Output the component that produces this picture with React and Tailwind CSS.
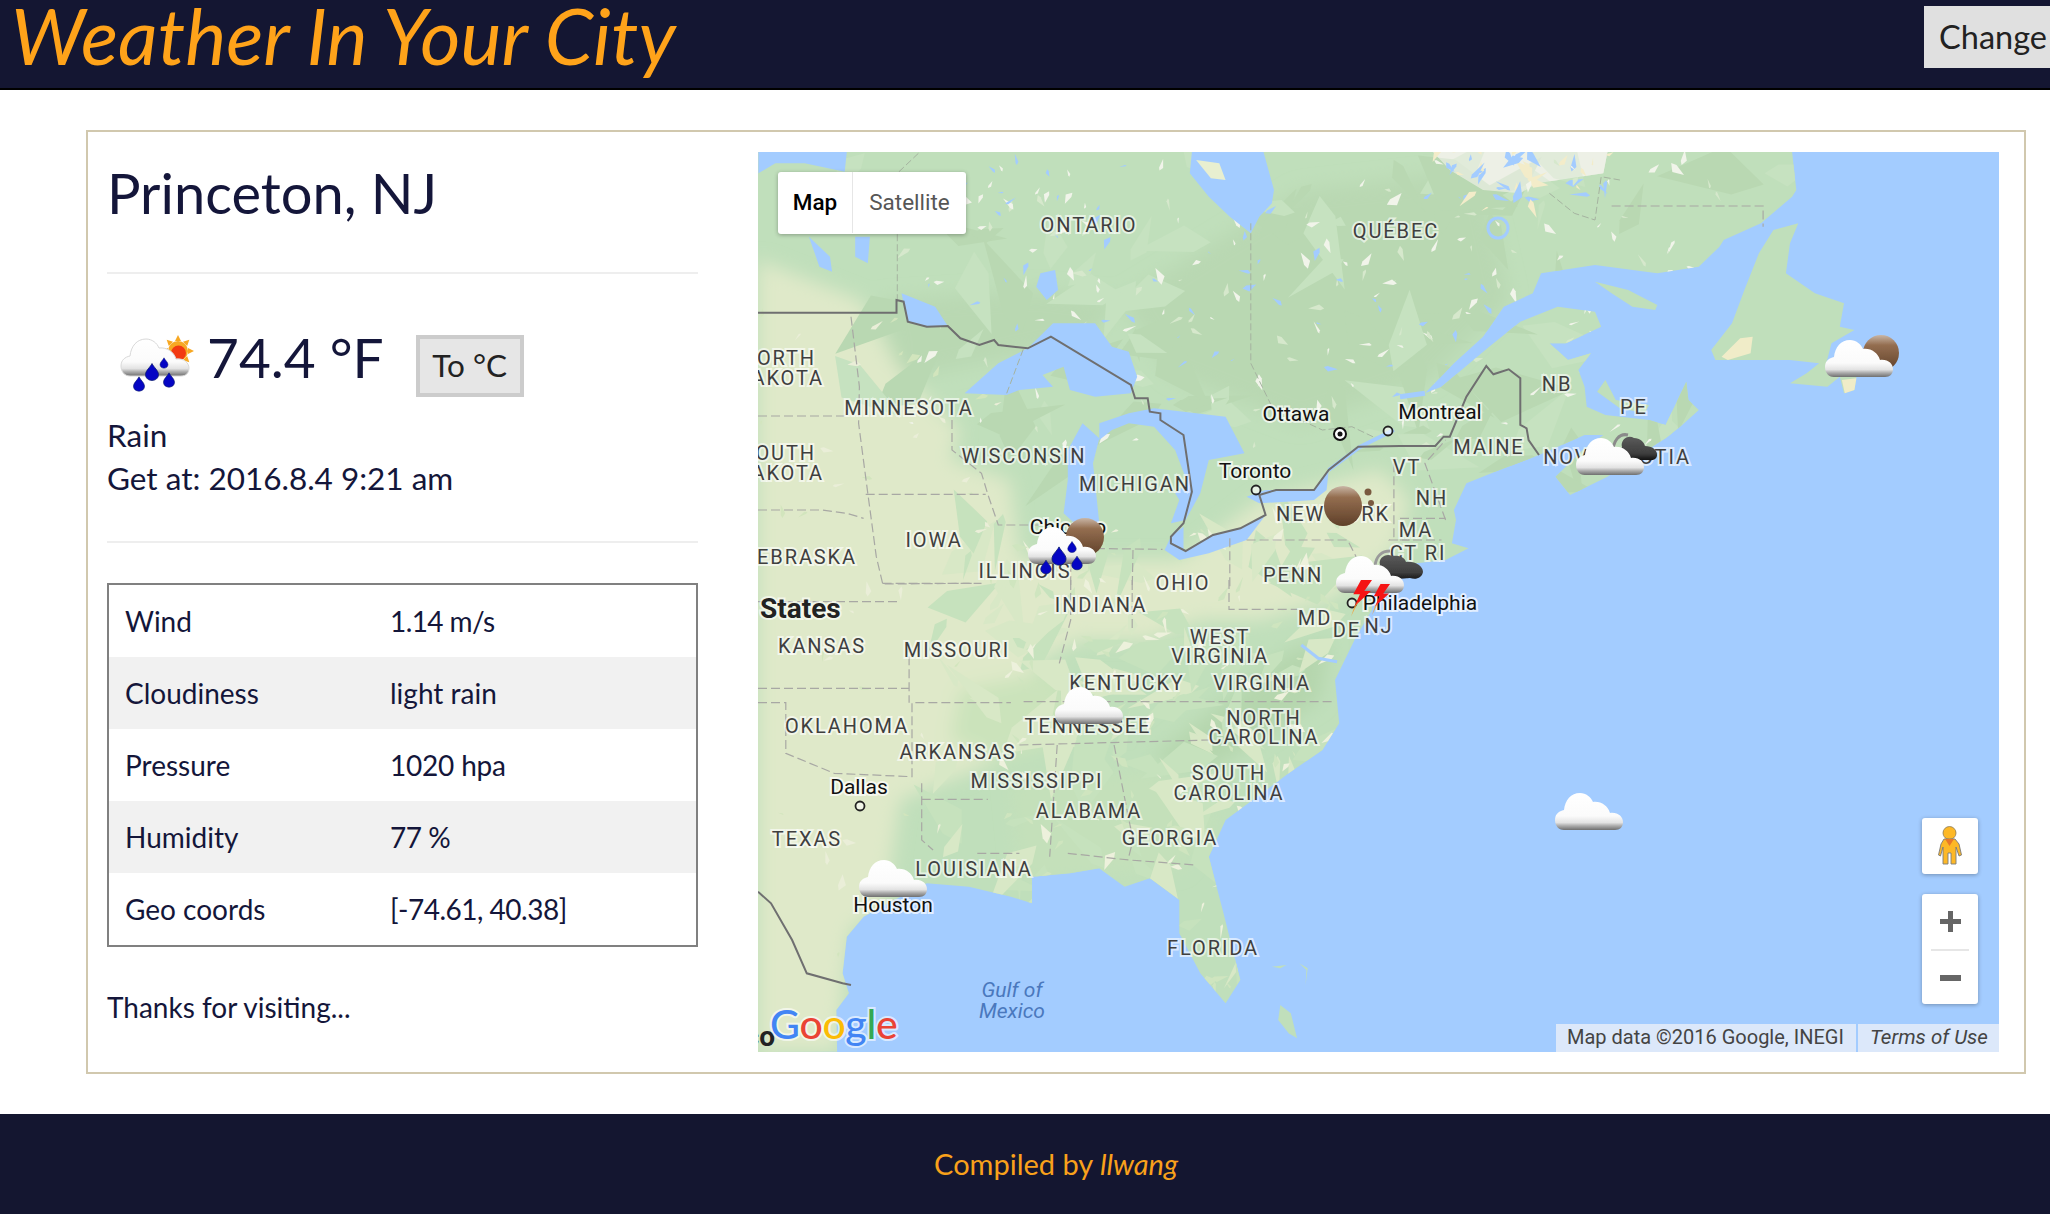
import React from 'react';

// helpers to read points off the map crops, into page coordinates
const z3 = (pts) => pts.map(([x, y]) => [750 + x / 2.376, 130 + y / 3]);
const z4 = (pts) => pts.map(([x, y]) => [1400 + x / 2.41, 130 + y / 3]);
const z5 = (pts) => pts.map(([x, y]) => [750 + x / 2.376, 580 + y / 3]);
const str = (pts) => pts.map((p) => p[0].toFixed(1) + ',' + p[1].toFixed(1)).join(' ');

const LAND = [
  [758, 152],
  ...z4([[945,66],[955,180],[945,200],[870,280],[780,330],[770,350],[720,410],[620,430],[470,405],[340,430],[320,490],[250,530],[200,620],[130,700],[60,790],[100,770],[215,650],[290,575],[380,530],[470,545],[485,590],[400,640],[360,640],[405,690],[460,670],[430,720],[445,770],[450,830],[495,855],[600,870],[640,885],[690,755],[695,810],[720,840],[680,885],[640,925],[620,940],[500,1040],[410,1095],[375,1040],[440,960],[490,915],[445,915],[335,975],[240,1020],[160,1060],[130,1140],[135,1170],[125,1240],[165,1255],[110,1290],[40,1300]]),
  [1372, 582], [1372, 610],
  ...z5([[1440,170],[1390,300],[1400,430],[1360,510],[1280,580],[1130,720],[1090,830],[1125,1000],[1165,1200],[1130,1270],[1070,1180],[1020,1060],[1020,960],[950,895],[890,920],[830,865],[760,880],[670,890],[670,970],[620,950],[520,920],[420,910],[320,975],[270,1010],[230,1070],[220,1180],[235,1240],[205,1290],[207,1415]]),
  [758, 1052],
];

const ISLANDS = [
  z4([[750,660],[800,580],[830,480],[865,370],[900,300],[960,280],[940,340],[930,430],[1000,490],[1070,520],[1060,590],[1095,600],[1040,640],[1025,710],[1100,740],[1095,780],[1070,790],[1060,740],[1030,770],[940,760],[980,730],[1010,700],[940,690],[760,690]]),
  z4([[470,455],[550,480],[620,525],[615,540],[560,530],[510,490]]),
  z4([[475,785],[495,750],[520,810],[600,825],[590,850],[530,835]]),
  z5([[1260,1275],[1285,1300],[1300,1375],[1280,1360],[1255,1320]]),
  z5([[1240,1160],[1275,1155],[1260,1165]]),
  z5([[1305,1150],[1325,1165],[1320,1215],[1322,1170]]),
];

const LAKES = [
  z3([[510,790],[590,700],[660,655],[720,580],[820,580],[860,650],[900,665],[920,740],[905,790],[820,800],[760,780],[745,710],[695,735],[720,770],[640,780],[610,795]]),
  z3([[755,960],[790,880],[830,925],[815,1000],[830,1180],[780,1190],[745,1150],[755,1050]]),
  z3([[830,880],[900,850],[960,835],[1130,860],[1175,970],[1090,990],[1070,1090],[1035,1170],[1000,1180],[1020,1110],[1010,1090],[1040,1060],[1010,960],[960,890],[900,880],[860,900],[830,930]]),
  z3([[985,1260],[1000,1220],[1030,1190],[1030,1265],[1100,1215],[1165,1195],[1225,1155],[1180,1230],[1090,1270],[1020,1290]]),
  z3([[1180,1100],[1225,1080],[1340,1080],[1375,1020],[1370,1080],[1340,1110],[1210,1120]]),
  z3([[1050,66],[1220,66],[1245,180],[1240,220],[1210,260],[1190,310],[1140,260],[1090,200],[1045,130]]),
  z3([[20,66],[230,66],[225,125],[130,100],[60,100],[20,130]]),
  z3([[140,320],[190,380],[195,425],[165,410]]),
  z3([[250,320],[285,320],[280,400],[250,380]]),
  z3([[690,430],[725,420],[732,480],[705,510],[680,470]]),
  z3([[360,490],[440,530],[470,588],[420,590],[375,575]]),
];

const STATE_LINES = [
  z3([[240,560],[260,770],[258,880],[280,1090],[300,1280],[315,1360]]),
  z3([[19,858],[225,858]]),
  z3([[275,1093],[560,1093]]),
  z3([[19,1140],[170,1140],[230,1150],[270,1165]]),
  z3([[480,870],[480,960],[550,1030],[565,1093],[590,1185],[760,1185]]),
  z3([[760,1255],[980,1258]]),
  z3([[910,1260],[908,1380]]),
  z3([[1140,1225],[1140,1380]]),
  z3([[1180,1230],[1420,1230],[1440,1280]]),
  z3([[1530,1000],[1530,1220],[1520,1230],[1568,1230]]),
  z3([[315,1360],[550,1360]]),
  z3([[762,1260],[762,1380]]),
  z5([[320,12],[530,10]]),
  z5([[19,65],[350,65]]),
  z5([[19,325],[378,325]]),
  z5([[378,190],[378,368]]),
  z5([[19,368],[85,368],[85,520],[200,580],[385,590],[385,368],[620,368]]),
  z5([[408,610],[408,780],[435,810]]),
  z5([[408,658],[565,658]]),
  z5([[640,495],[1090,480]]),
  z5([[650,365],[1390,365]]),
  z5([[730,495],[712,830]]),
  z5([[865,495],[910,780],[900,830]]),
  z5([[755,820],[900,840],[1060,855]]),
  z5([[540,820],[640,820]]),
  z5([[762,0],[762,120],[735,250]]),
  z5([[908,0],[908,150]]),
  z5([[1138,0],[1138,88],[1300,88]]),
  z4([[510,228],[875,228],[875,290]]),
  z4([[110,1170],[60,1000],[110,930]]),
  z4([[0,1165],[110,1165]]),
  z4([[0,1230],[100,1230]]),
];
// the fainter provincial lines in the green of Canada
const PROV_LINES = [
  z3([[1190,280],[1190,700],[1240,830],[1360,900],[1430,890],[1480,920]]),
  z3([[400,70],[350,130],[350,510]]),
  z4([[360,190],[420,250],[470,270],[485,140],[530,150]]),
  z3([[610,790],[650,655]]),
];

const BORDER = [
  ...z3([[19,548],[348,548],[348,510],[365,515],[375,575],[420,590],[470,588],[500,625],[545,645],[580,630],[590,645],[660,655],[715,620],[905,765],[915,805],[945,805],[950,845],[975,850],[975,870],[1030,915],[1050,1085],[1030,1180],[1000,1220],[1000,1240],[1035,1263],[1100,1215],[1165,1195],[1225,1155],[1210,1095],[1250,1080],[1340,1080],[1375,1020],[1445,950]]),
  ...z4([[0,948],[85,948],[105,920],[120,920],[160,800],[208,708],[225,733],[262,718],[290,745],[290,885],[305,895],[310,930],[335,975]]),
];
const MEX = z5([[19,935],[50,970],[100,1080],[135,1180],[220,1210],[240,1215]]);

// broad colour areas of the land
const PLAINS = [[758,260],[860,300],[900,370],[960,430],[950,460],[1010,480],[1020,560],[1180,560],[1260,500],[1380,470],[1410,500],[1395,550],[1330,600],[1260,620],[1200,620],[1150,640],[1080,640],[1040,660],[1000,760],[900,800],[885,905],[850,930],[837,1052],[758,1052]];
const FOREST = [[1120,300],[1300,190],[1480,170],[1510,300],[1430,380],[1300,425],[1170,375]];
const ONT = [[880,300],[1040,290],[1120,300],[1090,340],[1000,360],[900,380]];
const APPAL = [[1330,640],[1320,700],[1210,770],[1150,760],[1290,650]];
const OZARK = [[960,690],[1060,670],[1070,740],[1000,760],[950,740]];
const QC_N = z4([[80,66],[500,66],[490,130],[330,160],[290,190],[200,180],[120,120]]);

// shards of map texture, seeded so every run draws the same
function makeFlecks(count, seed, x0, y0, x1, y1, size) {
  let s = seed;
  const rnd = () => {
    s = (s * 16807) % 2147483647;
    return s / 2147483647;
  };
  const out = [];
  for (let i = 0; i < count; i++) {
    const x = x0 + rnd() * (x1 - x0);
    const y = y0 + rnd() * (y1 - y0);
    const a = rnd() * Math.PI * 2;
    const l = size * (0.35 + rnd());
    const w = l * (0.2 + rnd() * 0.5);
    out.push(str([
      [x, y],
      [x + Math.cos(a) * l, y + Math.sin(a) * l],
      [x + Math.cos(a + 1.2) * w, y + Math.sin(a + 1.2) * w],
      [x + Math.cos(a + 2.6) * w * 0.7, y + Math.sin(a + 2.6) * w * 0.7],
    ]));
  }
  return out;
}
const M_CANADA = makeFlecks(90, 31337, 850, 150, 1780, 470, 60);
const M_SOUTH = makeFlecks(110, 2024, 940, 520, 1340, 980, 50);
const F_CANADA = makeFlecks(190, 1234, 900, 160, 1760, 450, 10);
const F_WATER = makeFlecks(60, 777, 900, 160, 1500, 420, 8);
const F_QC = makeFlecks(40, 555, 1440, 152, 1610, 215, 14);
const F_SOUTH = makeFlecks(190, 4242, 1000, 520, 1340, 1000, 12);
const F_WEST = makeFlecks(50, 99, 760, 300, 1000, 960, 9);

const LABELS = [
  ['ONTARIO',1089,225],['QUÉBEC',1396,231],['MINNESOTA',909,408],['WISCONSIN',1024,456],['MICHIGAN',1135,484],
  ['IOWA',934,540],['ILLINOIS',1025,571],['OHIO',1183,583],['PENN',1293,575],['NEW YORK',1333,514],['NH',1432,498],
  ['MA',1416,530],['CT RI',1418,553],['VT',1407,467],['MAINE',1489,447],['NB',1557,384],['PE',1634,407],['NOVA SCOTIA',1617,457],
  ['INDIANA',1101,605],['KANSAS',822,646],['MISSOURI',957,650],['WEST',1220,637],['VIRGINIA',1220,656],['VIRGINIA',1262,683],
  ['KENTUCKY',1127,683],['MD',1315,618],['DE',1347,630],['NJ',1379,626],['OKLAHOMA',847,726],['TENNESSEE',1088,726],
  ['NORTH',1264,718],['CAROLINA',1264,737],['ARKANSAS',958,752],['MISSISSIPPI',1037,781],['SOUTH',1229,773],['CAROLINA',1229,793],
  ['ALABAMA',1089,811],['GEORGIA',1170,838],['TEXAS',807,839],['LOUISIANA',974,869],['FLORIDA',1213,948],
];
const CLIPPED = [['NORTH',816,358],['DAKOTA',824,378],['SOUTH',816,453],['DAKOTA',824,473],['NEBRASKA',857,557]];
const CITIES = [
  ['Ottawa',1296,414],['Montreal',1440,412],['Toronto',1255,471],['Chicago',1068,527],['Philadelphia',1420,603],['Dallas',859,787],['Houston',893,905],
];
const DOTS = [[1388,431],[1256,490],[860,806],[1352,603]];

const halo = { paintOrder: 'stroke' };

const Cloud = ({ x, y, s = 1, edge }) => (
  <path
    transform={`translate(${x} ${y}) scale(${s})`}
    filter="url(#soft)"
    fill="url(#cloudFill)"
    stroke={edge}
    strokeWidth={edge ? 1 : 0}
    d="M9 37C3 37 0 32 0 27C0 21 4 18 9 17C10 7 16 0 25 0C31 0 36 4 38 9C46 8 53 13 55 20C63 19 68 24 68 29C68 34 65 37 60 37Z"
  />
);

const Moon = ({ cx, cy, r, ry }) => (
  <ellipse cx={cx} cy={cy} rx={r} ry={ry || r} fill="url(#moonFill)" filter="url(#soft)" />
);

const Drop = ({ x, y, s = 1 }) => (
  <path
    transform={`translate(${x} ${y}) scale(${s})`}
    fill="#0505c4"
    stroke="#0a1a70"
    strokeWidth="0.6"
    d="M0 -6.500C1.500 -3.500 5 -1 5 2C5 4.800 2.600 6.500 0 6.500C-2.600 6.500 -5 4.800 -5 2C-5 -1 -1.500 -3.500 0 -6.500Z"
  />
);

const Bolt = ({ x, y, s = 1 }) => (
  <g transform={`translate(${x} ${y}) scale(${s})`}>
    <path fill="#f51414" d="M10 0H20L13 10H19L4 24L9 13H3Z" />
    <path fill="#f2a03a" opacity="0.85" d="M4 24L1 33L8 19Z" />
  </g>
);

const MapCanvas = () => (
  <svg viewBox="758 152 1241 900" className="block w-full h-full">
    <defs>
      <linearGradient id="cloudFill" x1="0" y1="0" x2="0" y2="1">
        <stop offset="0" stopColor="#ffffff" />
        <stop offset="0.62" stopColor="#fbfbfb" />
        <stop offset="0.8" stopColor="#e3e3e3" />
        <stop offset="0.88" stopColor="#b0b0b0" />
        <stop offset="1" stopColor="#6f6f6f" />
      </linearGradient>
      <linearGradient id="darkFill" x1="0" y1="0" x2="0" y2="1">
        <stop offset="0" stopColor="#5a5a5a" />
        <stop offset="0.7" stopColor="#3f3f3f" />
        <stop offset="1" stopColor="#111111" />
      </linearGradient>
      <linearGradient id="moonFill" x1="0" y1="0" x2="0" y2="1">
        <stop offset="0" stopColor="#c9b6a6" />
        <stop offset="0.28" stopColor="#946e50" />
        <stop offset="1" stopColor="#5f4029" />
      </linearGradient>
      <filter id="soft" x="-10%" y="-10%" width="120%" height="120%">
        <feGaussianBlur stdDeviation="0.7" />
      </filter>
      <filter id="shade" x="-20%" y="-20%" width="140%" height="140%">
        <feGaussianBlur stdDeviation="9" />
      </filter>
      <clipPath id="landClip">
        <polygon points={str(LAND)} />
      </clipPath>
    </defs>

    <rect x="758" y="152" width="1241" height="900" fill="#a3ccff" />
    <polygon points={str(LAND)} fill="#c0dfbb" />
    {ISLANDS.map((p, i) => (
      <polygon key={i} points={str(p)} fill="#c0dfbb" />
    ))}
    <polygon points={str(z4([[775,680],[820,625],[850,620],[845,670],[790,690]]))} fill="#f0ecc8" />
    <polygon points={str(z4([[1065,750],[1100,745],[1095,780],[1072,790]]))} fill="#f0ecc8" />

    <g clipPath="url(#landClip)">
      <g filter="url(#shade)">
        <polygon points={str(FOREST)} fill="#b9d8b2" />
        <polygon points={str(ONT)} fill="#b9d8b2" />
        <polygon points={str(PLAINS)} fill="#dfe9c9" />
        <polygon points={str(OZARK)} fill="#cbe3bb" />
        <polygon points={str(APPAL)} fill="#b5d6ad" />
        <polygon points={str([[1010,780],[1160,770],[1220,820],[1180,870],[1020,880]])} fill="#c4e0ba" />
      </g>
      <polygon points={str(QC_N)} fill="#edf0e6" />
      {M_CANADA.map((p, i) => (
        <polygon key={i} points={p} fill={i % 2 === 0 ? '#b9d8b2' : '#c6e2c0'} />
      ))}
      {M_SOUTH.map((p, i) => (
        <polygon key={i} points={p} fill={i % 2 === 0 ? '#c6e2bd' : '#d8e8c6'} />
      ))}
      <polygon points={str(QC_N)} fill="#edf0e6" fillOpacity="0.7" />
      {F_QC.map((p, i) => (
        <polygon key={i} points={p} fill={i % 2 === 0 ? '#f3ecc9' : '#a3ccff'} />
      ))}
      {F_CANADA.map((p, i) => (
        <polygon key={i} points={p} fill={i % 3 === 0 ? '#d6e8cc' : '#f1f4ea'} />
      ))}
      {F_WATER.map((p, i) => (
        <polygon key={i} points={p} fill="#a3ccff" />
      ))}
      {F_SOUTH.map((p, i) => (
        <polygon key={i} points={p} fill={i % 2 === 0 ? '#edf1dc' : '#cfe5bf'} />
      ))}
      {F_WEST.map((p, i) => (
        <polygon key={i} points={p} fill={i % 2 === 0 ? '#d2e5bd' : '#eaeed8'} />
      ))}
    </g>

    {LAKES.map((p, i) => (
      <polygon key={i} points={str(p)} fill="#a3ccff" />
    ))}
    <polygon points={str(z3([[1060,90],[1115,100],[1130,150],[1095,145]]))} fill="#e8efd0" />
    <polyline points={str(z3([[1375,1020],[1450,950],[1530,900]]))} fill="none" stroke="#a3ccff" strokeWidth="4" />
    <polyline points={str(z4([[0,800],[60,790]]))} fill="none" stroke="#a3ccff" strokeWidth="5" />
    <circle cx="1498" cy="228" r="10" fill="none" stroke="#a3ccff" strokeWidth="3" />
    <polyline points={str(z5([[1310,195],[1350,235],[1395,245]]))} fill="none" stroke="#a3ccff" strokeWidth="3" />

    {STATE_LINES.map((p, i) => (
      <polyline key={i} points={str(p)} fill="none" stroke="#a8a8a4" strokeWidth="1.2" strokeDasharray="9 4" />
    ))}
    {PROV_LINES.map((p, i) => (
      <polyline key={i} points={str(p)} fill="none" stroke="#a5b3a0" strokeWidth="1" strokeDasharray="7 3" />
    ))}
    <polyline points={str(BORDER)} fill="none" stroke="#6f6f70" strokeWidth="2" />
    <polyline points={str(MEX)} fill="none" stroke="#6f6f70" strokeWidth="2" />

    <g fontFamily="Roboto, sans-serif">
      <g fontSize="20" letterSpacing="1.9" fill="#3f3f3f" stroke="#ffffff" strokeOpacity="0.6" strokeWidth="4" style={halo}>
        {LABELS.map(([t, x, y], i) => (
          <text key={i} x={x} y={y + 7} textAnchor="middle">{t}</text>
        ))}
        {CLIPPED.map(([t, x, y], i) => (
          <text key={i} x={x} y={y + 7} textAnchor="end">{t}</text>
        ))}
      </g>
      <g fontSize="21" fill="#111111" stroke="#ffffff" strokeOpacity="0.7" strokeWidth="4" style={halo}>
        {CITIES.map(([t, x, y], i) => (
          <text key={i} x={x} y={y + 7} textAnchor="middle">{t}</text>
        ))}
      </g>
      <text x="760" y="618" fontSize="28" fontWeight="700" fill="#222222" stroke="#ffffff" strokeOpacity="0.6" strokeWidth="4" style={halo}>States</text>
      <text x="775" y="1046" textAnchor="end" fontSize="28" fontWeight="700" fill="#222222">Mexico</text>
      <g fontSize="21" fontStyle="italic" fill="#4a78bd" textAnchor="middle">
        <text x="1012" y="997">Gulf of</text>
        <text x="1012" y="1018">Mexico</text>
      </g>
    </g>

    {DOTS.map(([x, y], i) => (
      <circle key={i} cx={x} cy={y} r="4.5" fill="#ffffff" fillOpacity="0.6" stroke="#222222" strokeWidth="1.8" />
    ))}
    <circle cx="1340" cy="434" r="6" fill="#ffffff" stroke="#111111" strokeWidth="2" />
    <circle cx="1340" cy="434" r="2.5" fill="#111111" />

    {/* weather markers */}
    <Moon cx={1881} cy={353} r={18} />
    <Cloud x={1825} y={340} />
    <path d="M1613 455C1612 440 1620 433 1628 435" fill="none" stroke="#8a8a8a" strokeWidth="3" filter="url(#soft)" />
    <path filter="url(#soft)" fill="url(#darkFill)" d="M1630 460C1622 460 1618 452 1622 447C1620 440 1628 434 1634 438C1640 438 1644 442 1645 446C1652 446 1658 450 1657 456C1656 460 1652 461 1648 460Z" />
    <Cloud x={1576} y={438} />
    <Moon cx={1343} cy={506} r={19} ry={20} />
    <circle cx="1368" cy="492" r="3.5" fill="#7a5a40" />
    <circle cx="1371" cy="503" r="3" fill="#7a5a40" />
    <Moon cx={1085} cy={537} r={19} />
    <Cloud x={1028} y={527} />
    <Drop x={1059} y={556} s={1.4} />
    <Drop x={1072} y={547} s={0.85} />
    <Drop x={1046} y={567} s={1.05} />
    <Drop x={1077} y={563} s={1.05} />
    <path d="M1375 566C1376 556 1382 551 1390 551" fill="none" stroke="#9a9a9a" strokeWidth="3" filter="url(#soft)" />
    <path filter="url(#soft)" fill="url(#darkFill)" d="M1385 580C1376 580 1372 570 1380 565C1378 558 1386 553 1392 556C1400 555 1405 558 1406 562C1415 561 1423 566 1423 572C1422 578 1416 580 1410 578Z" />
    <Cloud x={1336} y={556} />
    <Bolt x={1350} y={580} s={1.1} />
    <Bolt x={1371} y={584} s={0.95} />
    <Cloud x={1055} y={687} />
    <Cloud x={1555} y={793} />
    <Cloud x={859} y={860} />

    {/* Google wordmark */}
    <text x="770" y="1039" fontFamily="Lato, sans-serif" fontSize="41" fontWeight="500" stroke="#ffffff" strokeOpacity="0.6" strokeWidth="4" style={halo} letterSpacing="-0.3">
      <tspan fill="#4285f4">G</tspan>
      <tspan fill="#ea4335">o</tspan>
      <tspan fill="#fbbc05">o</tspan>
      <tspan fill="#4285f4">g</tspan>
      <tspan fill="#34a853">l</tspan>
      <tspan fill="#ea4335">e</tspan>
    </text>
  </svg>
);

const RainIcon = () => (
  <svg width="80" height="64" viewBox="118 333 80 64" className="block">
    <g>
      {[0, 45, 90, 135, 180, 225, 270, 315].map((a) => (
        <path key={a} transform={`rotate(${a} 178 352)`} d="M175 342L178 336L181 342Z" fill="#f7a823" />
      ))}
      <circle cx="178" cy="352" r="10" fill="#f7a823" />
      <circle cx="178.5" cy="354" r="7.5" fill="#f23a12" />
    </g>
    <Cloud x={121} y={340} edge="#d8d8d8" />
    <Drop x={164} y={364} s={0.8} />
    <Drop x={152} y={373} s={1.3} />
    <Drop x={169} y={381} s={1.1} />
    <Drop x={139} y={385} s={1.1} />
  </svg>
);

const ROWS = [
  ['Wind', '1.14 m/s', 'tracking-[-0.6px]'],
  ['Cloudiness', 'light rain', ''],
  ['Pressure', '1020 hpa', 'tracking-[-0.2px]'],
  ['Humidity', '77 %', 'tracking-[-0.5px]'],
  ['Geo coords', '[-74.61, 40.38]', 'tracking-[-0.5px]'],
];

const App = () => {
  return (
    <div className="min-h-screen w-full bg-white font-['Lato',sans-serif] text-[#14163a] overflow-hidden">
      {/* Header */}
      <header className="h-[90px] flex items-start justify-between bg-[#141632] border-b-2 border-black overflow-hidden">
        <h1 className="ml-[11px] text-[77.500px] leading-[72px] italic font-normal text-[#ffa31a] whitespace-nowrap">
          Weather In Your City
        </h1>
        <button className="mt-[6px] mr-[-12px] h-[62px] px-[15px] shrink-0 bg-[#e0e0e0] text-[#222] text-[32.500px]">Change</button>
      </header>

      {/* Main box */}
      <main className="mt-[40px] ml-[86px] w-[1940px] h-[944px] border-2 border-[#d1c8ae] flex pl-[19px] pt-[20px] gap-[60px]">
        <section className="w-[591px] shrink-0">
          <h2 className="mt-[9px] text-[56px] leading-[64px] font-normal">Princeton, NJ</h2>
          <hr className="mt-[47px] border-t-2 border-[#eeeeee]" />
          <div className="mt-[58px] flex items-start">
            <div className="ml-[11px] shrink-0"><RainIcon /></div>
            <span className="ml-[9px] mt-[-9px] text-[55px] leading-[68px] whitespace-nowrap">74.4 °F</span>
            <button className="ml-[32px] mt-[3px] w-[108px] h-[62px] border-4 border-[#cccccc] bg-[#e6e6e6] text-[31.500px] text-[#222]">To °C</button>
          </div>
          <p className="mt-[17px] text-[31.500px] leading-[43px]">Rain</p>
          <p className="text-[31.500px] leading-[43px] whitespace-nowrap">Get at: 2016.8.4 9:21 am</p>
          <hr className="mt-[41px] border-t-2 border-[#eeeeee]" />
          <div className="mt-[40px] border-2 border-[#808080]">
            {ROWS.map(([k, v, t], i) => (
              <div key={k} className={`h-[72px] flex items-center text-[28px] ${i % 2 === 1 ? 'bg-[#f1f1f1]' : ''}`}>
                <span className="ml-[16px] w-[265px] shrink-0">{k}</span>
                <span className={t}>{v}</span>
              </div>
            ))}
          </div>
          <p className="mt-[40px] text-[28px] leading-[40px]">Thanks for visiting...</p>
        </section>

        {/* Map */}
        <div className="relative w-[1241px] h-[900px] shrink-0 overflow-hidden">
          <MapCanvas />

          <div className="absolute left-[20px] top-[20px] flex h-[62px] pb-[1px] rounded-[3px] bg-white shadow-[0_1px_4px_rgba(0,0,0,0.3)] font-['Roboto',sans-serif] text-[22.500px]">
            <div className="w-[75px] flex items-center justify-center font-medium text-black border-r border-[#e6e6e6]">Map</div>
            <div className="w-[113px] flex items-center justify-center text-[#565656]">Satellite</div>
          </div>

          <div className="absolute right-[21px] bottom-[178px] w-[56px] h-[56px] rounded-[3px] bg-white shadow-[0_1px_4px_rgba(0,0,0,0.3)] flex items-center justify-center">
            <svg width="24" height="40" viewBox="0 0 24 40">
              <circle cx="11.5" cy="7" r="6.5" fill="#fdb827" stroke="#8a7a55" strokeWidth="0.8" />
              <path d="M6 13H17L21 18L23.5 29L21 30L18 21V38H13V27H10V38H5V21L2.500 30L0.500 29L3 18Z" fill="#fdb827" stroke="#7a7a7a" strokeWidth="0.9" />
              <path d="M7 13H16L11.500 20Z" fill="#e8772a" />
            </svg>
          </div>

          <div className="absolute right-[21px] bottom-[48px] w-[56px] h-[110px] rounded-[3px] bg-white shadow-[0_1px_4px_rgba(0,0,0,0.3)] flex flex-col items-center">
            <svg width="21" height="55" viewBox="0 0 21 55" className="shrink-0">
              <path d="M8 17H13V25H21V30H13V38H8V30H0V25H8Z" fill="#666666" />
            </svg>
            <div className="w-[38px] h-[2px] bg-[#e6e6e6] shrink-0" />
            <svg width="21" height="53" viewBox="0 0 21 53" className="shrink-0">
              <rect x="0" y="24" width="21" height="6" fill="#666666" />
            </svg>
          </div>

          <div className="absolute right-0 bottom-0 h-[28px] flex gap-[2px] font-['Roboto',sans-serif] text-[20px] leading-[26px] text-[#444444]">
            <div className="w-[300px] bg-[#dce8fa] pl-[11px] whitespace-nowrap">Map data ©2016 Google, INEGI</div>
            <div className="w-[141px] bg-[#dce8fa] pl-[12px] text-[20.500px] italic whitespace-nowrap">Terms of Use</div>
          </div>
        </div>
      </main>

      {/* Footer */}
      <footer className="mt-[40px] h-[100px] pl-[62px] flex items-center justify-center bg-[#141630] text-[#f9a11b] text-[29px]">
        <span>Compiled by <em>llwang</em></span>
      </footer>
    </div>
  );
};

export default App;
